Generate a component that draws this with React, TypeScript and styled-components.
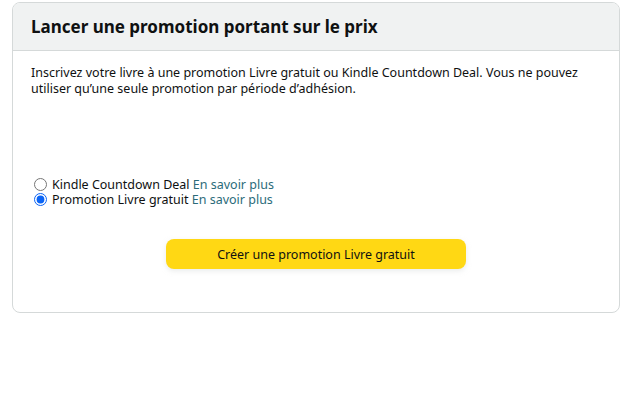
import React from "react";
import styled, { createGlobalStyle } from "styled-components";

const Global = createGlobalStyle`
  html, body { margin: 0; padding: 0; background: #fff; }
  body { font-family: "Noto Sans", "Open Sans", sans-serif; color: #0f1111; }
`;

const Page = styled.div`
  padding: 2px 22px 0 12px;
`;

const Card = styled.section`
  width: 608px;
  box-sizing: border-box;
  border: 1px solid #d5d9d9;
  border-radius: 8px;
  overflow: hidden;
`;

const Header = styled.header`
  height: 48px;
  box-sizing: border-box;
  background: #f0f2f2;
  border-bottom: 1px solid #d5d9d9;
  display: flex;
  align-items: center;
  padding: 0 18px;
`;

const Title = styled.h2`
  margin: 0;
  font-size: 17px;
  font-weight: 700;
  color: #0f1111;
`;

const Body = styled.div`
  padding: 14px 18px 43px;
  display: flex;
  flex-direction: column;
`;

const Intro = styled.p`
  margin: 0;
  font-size: 12.5px;
  line-height: 16px;
  color: #0f1111;
`;

const Options = styled.div`
  margin-top: 80px;
  display: flex;
  flex-direction: column;
`;

const Option = styled.label`
  display: flex;
  align-items: center;
  font-size: 12.5px;
  line-height: 15px;
  height: 15px;
  gap: 5px;
`;

const Radio = styled.input`
  margin: 0 0 0 3px;
  width: 13px;
  height: 13px;
  accent-color: #0b64f5;
`;

const Link = styled.a`
  color: #2b6b7a;
  text-decoration: none;
`;

const Actions = styled.div`
  margin-top: 32px;
  display: flex;
  justify-content: center;
`;

const Button = styled.button`
  width: 300px;
  height: 30px;
  border: none;
  border-radius: 8px;
  background: #ffd814;
  box-shadow: 0 2px 5px rgba(213, 217, 217, 0.5);
  font-family: inherit;
  font-size: 12.5px;
  color: #0f1111;
  cursor: pointer;
`;

export default function App() {
  return (
    <>
      <Global />
      <Page>
        <Card>
          <Header>
            <Title>Lancer une promotion portant sur le prix</Title>
          </Header>
          <Body>
            <Intro>
              Inscrivez votre livre à une promotion Livre gratuit ou Kindle Countdown Deal. Vous ne pouvez
              utiliser qu’une seule promotion par période d’adhésion.
            </Intro>
            <Options>
              <Option>
                <Radio type="radio" name="promo" />
                <span>
                  Kindle Countdown Deal <Link href="#">En savoir plus</Link>
                </span>
              </Option>
              <Option>
                <Radio type="radio" name="promo" defaultChecked />
                <span>
                  Promotion Livre gratuit <Link href="#">En savoir plus</Link>
                </span>
              </Option>
            </Options>
            <Actions>
              <Button>Créer une promotion Livre gratuit</Button>
            </Actions>
          </Body>
        </Card>
      </Page>
    </>
  );
}
